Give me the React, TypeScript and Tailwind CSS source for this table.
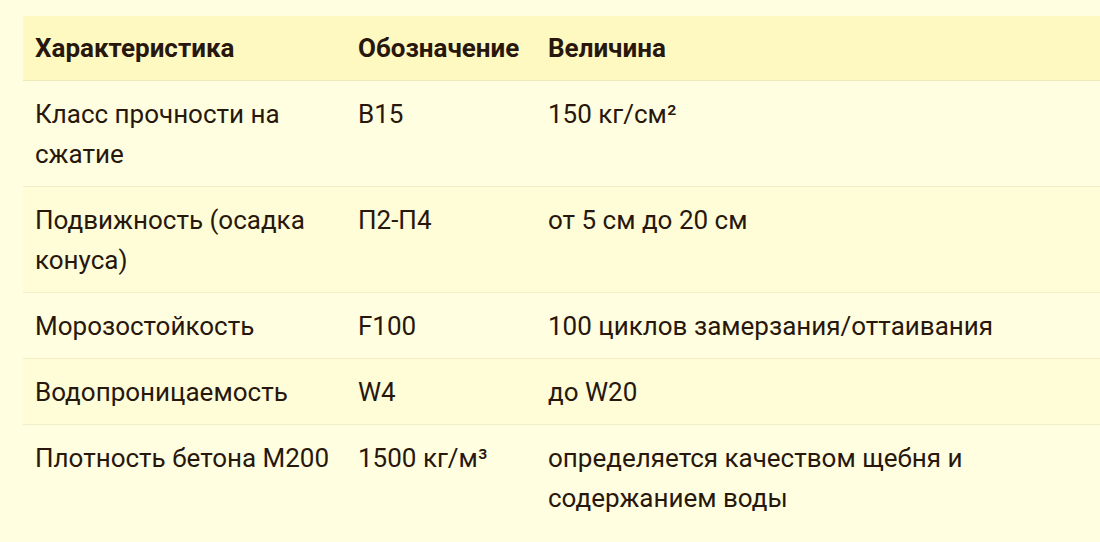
import React from 'react';

const rows = [
  { name: 'Класс прочности на сжатие', code: 'B15', value: '150 кг/см²' },
  { name: 'Подвижность (осадка конуса)', code: 'П2-П4', value: 'от 5 см до 20 см' },
  { name: 'Морозостойкость', code: 'F100', value: '100 циклов замерзания/оттаивания' },
  { name: 'Водопроницаемость', code: 'W4', value: 'до W20' },
  { name: 'Плотность бетона М200', code: '1500 кг/м³', value: 'определяется качеством щебня и содержанием воды' },
];

export default function App() {
  return (
    <div
      className="min-h-screen w-[1100px] overflow-hidden bg-[#fffee0] pt-4 pl-[23px] text-[#27170c]"
      style={{ fontFamily: 'Roboto, "Noto Sans", sans-serif' }}
    >
      <table className="w-[1077px] table-fixed border-collapse text-[26px] leading-[40px]">
        <colgroup>
          <col className="w-[323px]" />
          <col className="w-[190px]" />
          <col />
        </colgroup>
        <thead>
          <tr className="bg-[#fef9c0] border-b border-[#eee9bd]">
            <th className="px-3 py-3 text-left font-bold">Характеристика</th>
            <th className="px-3 py-3 text-left font-bold">Обозначение</th>
            <th className="px-3 py-3 text-left font-bold">Величина</th>
          </tr>
        </thead>
        <tbody>
          {rows.map((r, i) => (
            <tr
              key={r.name}
              className={`${i < rows.length - 1 ? 'border-b border-[#f1edc6]' : ''} ${i % 2 === 1 ? 'bg-[#fefdd8]' : 'bg-[#fffee0]'}`}
            >
              <td className="px-3 pt-[13px] pb-[12px] align-top">{r.name}</td>
              <td className="px-3 pt-[13px] pb-[12px] align-top">{r.code}</td>
              <td className="px-3 pt-[13px] pb-[12px] align-top">{r.value}</td>
            </tr>
          ))}
        </tbody>
      </table>
    </div>
  );
}
